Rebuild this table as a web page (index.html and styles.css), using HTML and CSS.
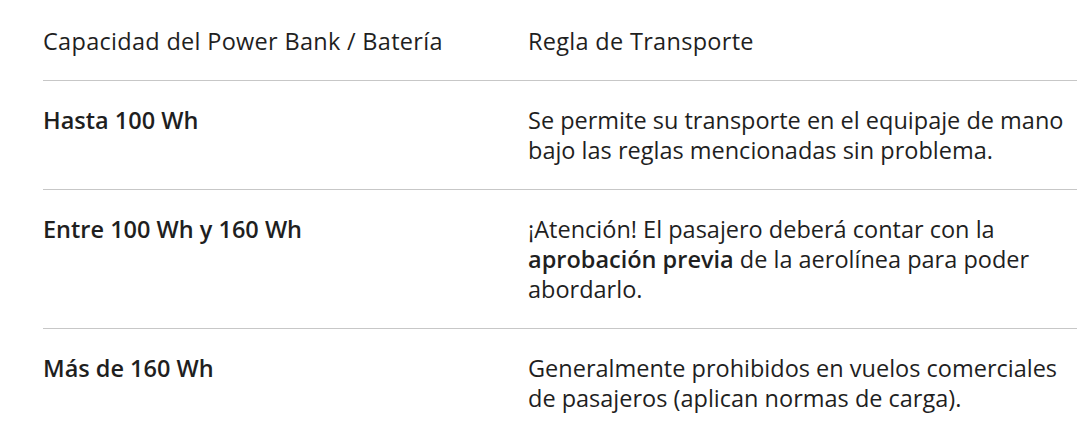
FILE: index.html
```html
<!DOCTYPE html>
<html lang="es">
<head>
<meta charset="utf-8">
<title>Power Bank</title>
<link rel="stylesheet" href="styles.css">
</head>
<body>
<table class="rules">
  <thead>
    <tr>
      <th class="col-cap">Capacidad del Power Bank / Batería</th>
      <th class="col-rule">Regla de Transporte</th>
    </tr>
  </thead>
  <tbody>
    <tr>
      <td class="col-cap"><strong>Hasta 100 Wh</strong></td>
      <td class="col-rule">Se permite su transporte en el equipaje de mano bajo las reglas mencionadas sin problema.</td>
    </tr>
    <tr>
      <td class="col-cap"><strong>Entre 100 Wh y 160 Wh</strong></td>
      <td class="col-rule">¡Atención! El pasajero deberá contar con la <strong>aprobación previa</strong> de la aerolínea para poder abordarlo.</td>
    </tr>
    <tr>
      <td class="col-cap"><strong>Más de 160 Wh</strong></td>
      <td class="col-rule">Generalmente prohibidos en vuelos comerciales de pasajeros (aplican normas de carga).</td>
    </tr>
  </tbody>
</table>
</body>
</html>
```
FILE: styles.css
```css
html, body {
  margin: 0;
  padding: 0;
  background: #ffffff;
  overflow: hidden;
}
body {
  font-family: "Open Sans", Roboto, sans-serif;
  color: #1f1f1f;
  font-size: 23.5px;
  line-height: 30px;
}
.rules {
  border-collapse: collapse;
  margin: 2px 0 0 43px;
  width: 1034px;
  table-layout: fixed;
}
.rules th,
.rules td {
  text-align: left;
  vertical-align: top;
  padding: 24px 0;
  font-weight: 400;
}
.rules thead th {
  letter-spacing: 0.3px;
}
.rules tbody td {
  border-top: 1px solid #c7c7c7;
}
.col-cap {
  width: 485px;
}
.rules .col-rule {
  padding-right: 4px;
}
strong {
  font-weight: 600;
}
```
